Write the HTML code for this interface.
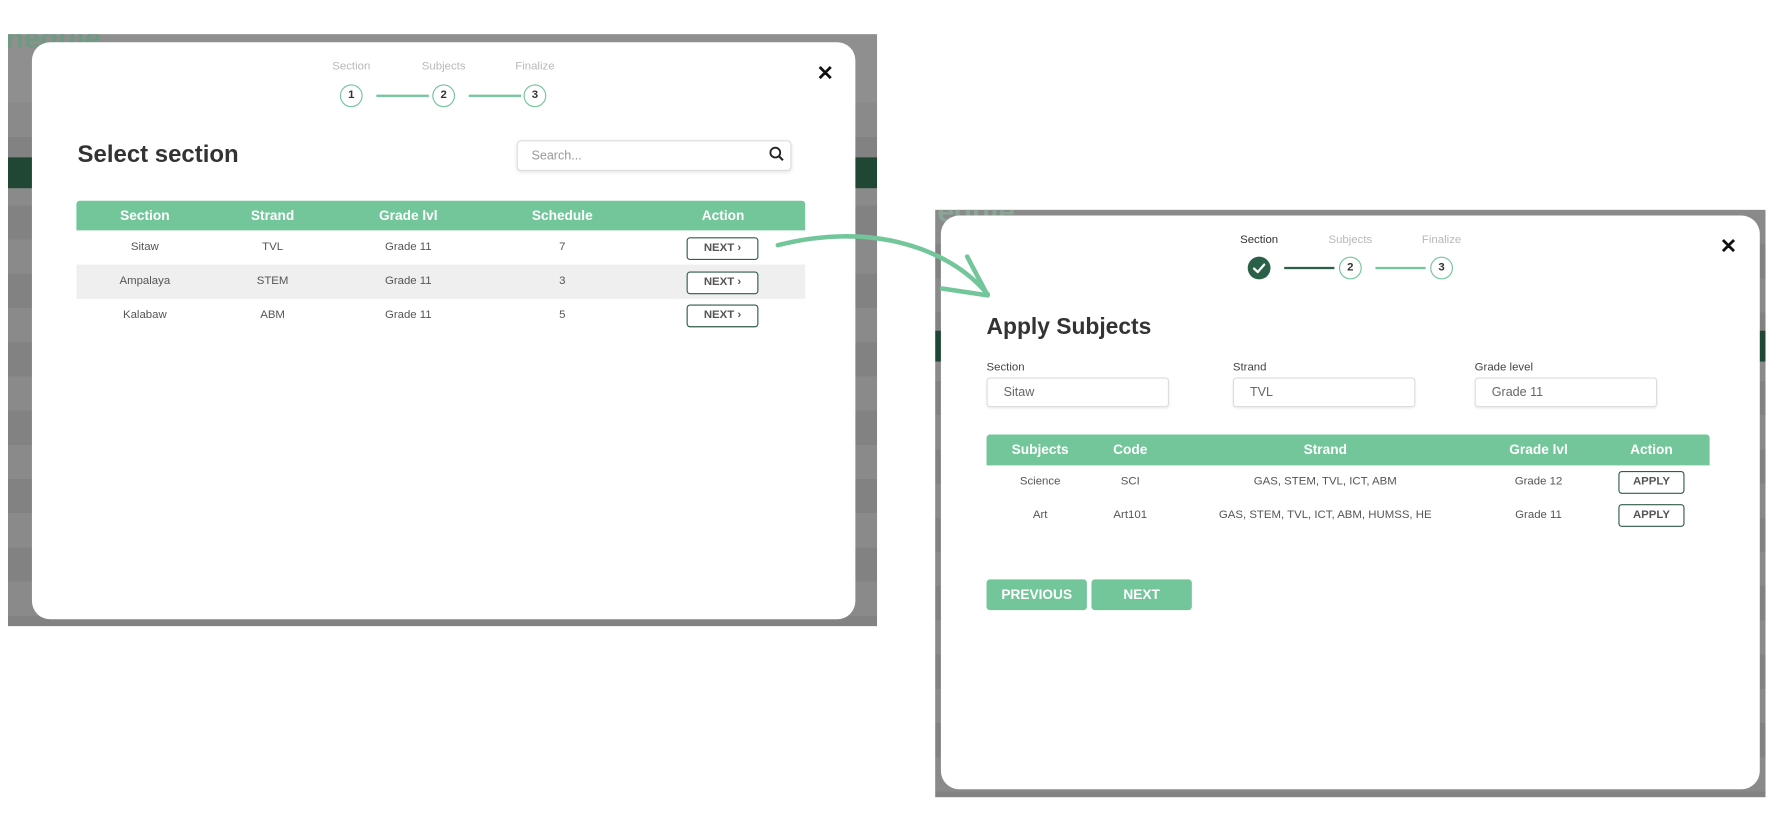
<!DOCTYPE html>
<html><head><meta charset="utf-8"><style>
*{box-sizing:border-box;margin:0;padding:0}
body{width:1788px;height:813px;background:#fff;overflow:hidden;font-family:"Liberation Sans",sans-serif}
#w{position:absolute;left:0;top:0;width:1570px;height:713px;transform:scale(1.1405);transform-origin:0 0}
.a{position:absolute}
.bd{background:repeating-linear-gradient(#8a8a8a 0 30px,#828282 30px 60px);overflow:hidden}
.modal{background:#fff;border-radius:16px}
.lbl{position:absolute;font-size:10px;color:#b8b8b8;transform:translateX(-50%)}
.c{position:absolute;width:20px;height:20px;border:1.5px solid #72c69a;border-radius:50%;font-size:10px;font-weight:bold;color:#333;text-align:center;line-height:17px;background:#fff}
.ln{position:absolute;height:2px;background:#72c69a}
.x{position:absolute;font-size:18px;font-weight:bold;color:#111}
.h{position:absolute;font-weight:bold;color:#333;font-size:21px}
.th{position:absolute;background:#72c69a;border-radius:3px 3px 0 0;color:#fff;font-weight:bold;font-size:12px}
.t{position:absolute;transform:translateX(-50%);white-space:nowrap}
.td{position:absolute;font-size:10px;color:#555;transform:translateX(-50%);white-space:nowrap}
.btn{position:absolute;border:1.3px solid #2f5e48;border-radius:3px;font-size:10px;font-weight:bold;color:#555;text-align:center;background:#fff}
.inp{position:absolute;border:1px solid #ddd;border-radius:3px;height:26px;width:160px;font-size:11px;color:#666;padding-left:14px;line-height:24px;box-shadow:0 1px 2px rgba(0,0,0,.08)}
.fl{position:absolute;font-size:10px;color:#444}
.gb{position:absolute;background:#72c69a;color:#fff;font-weight:bold;font-size:12px;text-align:center;line-height:27px;border-radius:3px}
.ghost{position:absolute;font-size:26px;font-weight:bold;color:#6f9a82}
</style></head><body><div id="w">
<!-- left -->
<div class="a bd" style="left:7px;top:30px;width:762px;height:519px">
<div class="a" style="left:0;top:0;width:762px;height:60px;background:#8f8f8f"></div>
<div class="a" style="left:0;top:108px;width:762px;height:27px;background:#1f4733"></div>
<div class="ghost" style="left:-2px;top:-12px">nedule</div>
</div>
<div class="a modal" style="left:28px;top:37px;width:722px;height:506px"></div>
<div class="lbl" style="left:308px;top:53px">Section</div>
<div class="lbl" style="left:389px;top:53px">Subjects</div>
<div class="lbl" style="left:469px;top:53px">Finalize</div>
<div class="c" style="left:298px;top:74px">1</div>
<div class="ln" style="left:330px;top:83px;width:46px"></div>
<div class="c" style="left:379px;top:74px">2</div>
<div class="ln" style="left:411px;top:83px;width:46px"></div>
<div class="c" style="left:459px;top:74px">3</div>
<div class="x" style="left:716px;top:54px">✕</div>
<div class="h" style="left:68px;top:124px">Select section</div>
<div class="a" style="left:453px;top:123px;width:241px;height:27px;border:1px solid #ddd;border-radius:4px;box-shadow:0 1px 3px rgba(0,0,0,.1);font-size:11px;color:#999;padding:7px 12px">Search...</div>
<svg class="a" style="left:674px;top:128px" width="14" height="14" viewBox="0 0 14 14"><circle cx="5.8" cy="5.8" r="4.3" fill="none" stroke="#222" stroke-width="1.6"/><line x1="9" y1="9" x2="12.5" y2="12.5" stroke="#222" stroke-width="1.8"/></svg>
<div class="th" style="left:67px;top:176px;width:639px;height:26px">
<span class="t" style="left:60px;top:6px">Section</span><span class="t" style="left:172px;top:6px">Strand</span><span class="t" style="left:291px;top:6px">Grade lvl</span><span class="t" style="left:426px;top:6px">Schedule</span><span class="t" style="left:567px;top:6px">Action</span></div>
<div class="a" style="left:67px;top:232px;width:639px;height:30px;background:#efefef"></div>
<div class="td" style="left:127px;top:211px">Sitaw</div><div class="td" style="left:239px;top:211px">TVL</div><div class="td" style="left:358px;top:211px">Grade 11</div><div class="td" style="left:493px;top:211px">7</div>
<div class="td" style="left:127px;top:241px">Ampalaya</div><div class="td" style="left:239px;top:241px">STEM</div><div class="td" style="left:358px;top:241px">Grade 11</div><div class="td" style="left:493px;top:241px">3</div>
<div class="td" style="left:127px;top:271px">Kalabaw</div><div class="td" style="left:239px;top:271px">ABM</div><div class="td" style="left:358px;top:271px">Grade 11</div><div class="td" style="left:493px;top:271px">5</div>
<div class="btn" style="left:602px;top:208px;width:63px;height:20px;line-height:18px">NEXT ›</div>
<div class="btn" style="left:602px;top:238px;width:63px;height:20px;line-height:18px">NEXT ›</div>
<div class="btn" style="left:602px;top:267px;width:63px;height:20px;line-height:18px">NEXT ›</div>
<!-- right -->
<div class="a bd" style="left:820px;top:184px;width:728px;height:515px">
<div class="a" style="left:0;top:106px;width:728px;height:27px;background:#1f4733"></div>
<div class="ghost" style="left:2px;top:-14px;color:#8aa596">edule</div>
</div>
<div class="a modal" style="left:825px;top:189px;width:718px;height:503px"></div>
<div class="lbl" style="left:1104px;top:205px;color:#333">Section</div>
<div class="lbl" style="left:1184px;top:205px">Subjects</div>
<div class="lbl" style="left:1264px;top:205px">Finalize</div>
<div class="a" style="left:1094px;top:225px;width:20px;height:20px;border-radius:50%;background:#2a6048"></div>
<svg class="a" style="left:1094px;top:225px" width="20" height="20"><path d="M5.5 10.5 L8.8 13.5 L14.5 7" fill="none" stroke="#fff" stroke-width="2" stroke-linecap="round" stroke-linejoin="round"/></svg>
<div class="ln" style="left:1126px;top:234px;width:44px;background:#2a6048"></div>
<div class="c" style="left:1174px;top:225px">2</div>
<div class="ln" style="left:1206px;top:234px;width:44px"></div>
<div class="c" style="left:1254px;top:225px">3</div>
<div class="x" style="left:1508px;top:206px">✕</div>
<div class="h" style="left:865px;top:276px;font-size:20px">Apply Subjects</div>
<div class="fl" style="left:865px;top:317px">Section</div>
<div class="fl" style="left:1081px;top:317px">Strand</div>
<div class="fl" style="left:1293px;top:317px">Grade level</div>
<div class="inp" style="left:865px;top:331px">Sitaw</div>
<div class="inp" style="left:1081px;top:331px">TVL</div>
<div class="inp" style="left:1293px;top:331px">Grade 11</div>
<div class="th" style="left:865px;top:381px;width:634px;height:27px">
<span class="t" style="left:47px;top:6px">Subjects</span><span class="t" style="left:126px;top:6px">Code</span><span class="t" style="left:297px;top:6px">Strand</span><span class="t" style="left:484px;top:6px">Grade lvl</span><span class="t" style="left:583px;top:6px">Action</span></div>
<div class="td" style="left:912px;top:417px">Science</div><div class="td" style="left:991px;top:417px">SCI</div><div class="td" style="left:1162px;top:417px">GAS, STEM, TVL, ICT, ABM</div><div class="td" style="left:1349px;top:417px">Grade 12</div>
<div class="td" style="left:912px;top:446px">Art</div><div class="td" style="left:991px;top:446px">Art101</div><div class="td" style="left:1162px;top:446px">GAS, STEM, TVL, ICT, ABM, HUMSS, HE</div><div class="td" style="left:1349px;top:446px">Grade 11</div>
<div class="btn" style="left:1419px;top:413px;width:58px;height:20px;line-height:18px">APPLY</div>
<div class="btn" style="left:1419px;top:442px;width:58px;height:20px;line-height:18px">APPLY</div>
<div class="gb" style="left:865px;top:508px;width:88px">PREVIOUS</div>
<div class="gb" style="left:957px;top:508px;width:88px">NEXT</div>
<!-- arrow on top -->
<svg class="a" style="left:0;top:0" width="1570" height="713"><path d="M682 215 C760 195 830 215 866 258" fill="none" stroke="#72c69a" stroke-width="4" stroke-linecap="round"/><path d="M848 225 L866 259 L826 253" fill="none" stroke="#72c69a" stroke-width="4" stroke-linecap="round" stroke-linejoin="round"/></svg>
</div></body></html>
